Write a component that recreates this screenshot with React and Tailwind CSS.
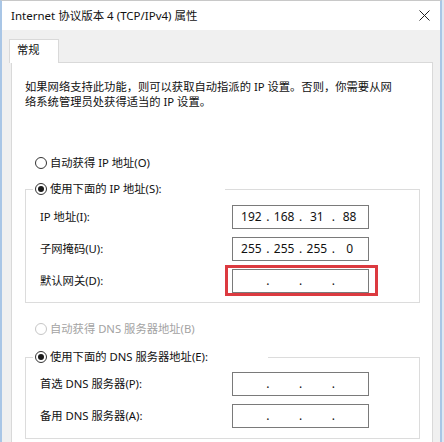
import React from 'react'

const Radio = ({ checked, disabled }) => (
  <span
    className={`flex h-[12px] w-[12px] shrink-0 items-center justify-center rounded-full border bg-white ${
      disabled ? 'border-[#c6c6c6]' : 'border-[#333333]'
    }`}
  >
    {checked && <span className="h-[6px] w-[6px] rounded-full bg-[#1a1a1a]" />}
  </span>
)

const IpBox = ({ parts = ['', '', '', ''] }) => (
  <div className="flex h-[24px] w-[137px] items-center border border-[#7a7a7a] bg-white px-[2px] text-[12px] leading-none text-[#111]">
    {parts.map((p, i) => (
      <React.Fragment key={i}>
        {i > 0 && <span className="flex w-0 justify-center">.</span>}
        <span className="flex-1 text-center">{p}</span>
      </React.Fragment>
    ))}
  </div>
)

const Row = ({ label, children }) => (
  <div className="grid grid-cols-[192px_137px] items-center">
    <span>{label}</span>
    {children}
  </div>
)

export default function App() {
  return (
    <div className="h-[442px] w-[444px] overflow-hidden bg-[#dfe8f3] font-['Noto_Sans','Noto_Sans_CJK_SC',sans-serif] text-[11.3px] text-[#111]">
      <div className="h-full w-[442px] border-x-2 border-t border-x-[#a9c6e6] border-t-[#c8c8c8] bg-[#f0f0f0]">
        {/* Title bar */}
        <div className="flex h-[29px] items-center justify-between bg-white pl-[9px] pr-[7px]">
          <span className="text-[11.5px]">Internet 协议版本 4 (TCP/IPv4) 属性</span>
          <svg width="11" height="11" viewBox="0 0 11 11" className="mr-[3px]">
            <path d="M0.5 0.5 L10.5 10.5 M10.5 0.5 L0.5 10.5" stroke="#222" strokeWidth="1" />
          </svg>
        </div>

        {/* Tabs */}
        <div className="pl-[7px] pt-[9px]">
          <div className="relative z-10 -mb-px flex h-[24px] w-[50px] items-center border-x border-t border-[#d9d9d9] bg-white pb-[2px] pl-[7px]">
            常规
          </div>

          {/* Tab panel */}
          <div className="ml-[2px] h-[400px] w-[422px] border border-[#d9d9d9] bg-white pl-[13px] pt-[16px]">
            <p className="whitespace-nowrap leading-[15px]">
              如果网络支持此功能，则可以获取自动指派的 IP 设置。否则，你需要从网
              <br />
              络系统管理员处获得适当的 IP 设置。
            </p>

            <label className="mt-[46px] flex h-[16px] items-center gap-[3px] pl-[10px]">
              <Radio />
              <span>自动获得 IP 地址(O)</span>
            </label>

            <fieldset className="mt-[10px] w-[395px] border border-[#dcdcdc]">
              <legend className="ml-[7px] flex h-[16px] w-[192px] items-center gap-[3px] bg-white pl-[2px]">
                <Radio checked />
                <span>使用下面的 IP 地址(S):</span>
              </legend>
              <div className="flex flex-col gap-[8px] pb-[9px] pl-[14px] pt-[8px]">
                <Row label="IP 地址(I):">
                  <IpBox parts={['192', '168', '31', '88']} />
                </Row>
                <Row label="子网掩码(U):">
                  <IpBox parts={['255', '255', '255', '0']} />
                </Row>
                <Row label="默认网关(D):">
                  <div className="relative">
                    <IpBox />
                    <span className="pointer-events-none absolute -bottom-[3px] -left-[7px] -right-[9px] -top-[4px] border-[3px] border-[#dc3a40]" />
                  </div>
                </Row>
              </div>
            </fieldset>

            <label className="mt-[18px] flex h-[16px] items-center gap-[3px] pl-[10px] text-[#a3a3a3]">
              <Radio disabled />
              <span>自动获得 DNS 服务器地址(B)</span>
            </label>

            <fieldset className="mt-[12px] w-[395px] border border-[#dcdcdc]">
              <legend className="ml-[7px] flex h-[16px] w-[235px] items-center gap-[3px] bg-white pl-[2px]">
                <Radio checked />
                <span>使用下面的 DNS 服务器地址(E):</span>
              </legend>
              <div className="flex flex-col gap-[8px] pb-[10px] pl-[14px] pt-[7px]">
                <Row label="首选 DNS 服务器(P):">
                  <IpBox />
                </Row>
                <Row label="备用 DNS 服务器(A):">
                  <IpBox />
                </Row>
              </div>
            </fieldset>
          </div>
        </div>
      </div>
    </div>
  )
}
